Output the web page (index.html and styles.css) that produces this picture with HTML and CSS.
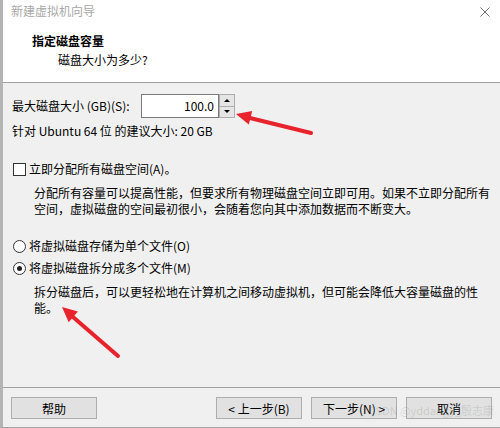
FILE: index.html
```html
<!DOCTYPE html>
<html>
<head>
  <title>新建虚拟机向导</title>
  <link rel="stylesheet" href="styles.css">
</head>
<body>
  <div class="window">
    <div class="header">
      <div class="titlebar">
        <span class="title">新建虚拟机向导</span>
        <svg class="close" width="10" height="10" viewBox="0 0 10 10">
          <path d="M0.5 0.5 L9.5 9.5 M9.5 0.5 L0.5 9.5" stroke="#6f6f6f" stroke-width="1" fill="none"/>
        </svg>
      </div>
      <div class="heading">指定磁盘容量</div>
      <div class="subheading">磁盘大小为多少?</div>
    </div>

    <div class="content">
      <div class="size-row">
        <label class="size-label">最大磁盘大小 (GB)(S):</label>
        <div class="spin">
          <div class="spin-input">100.0</div>
          <div class="spin-buttons">
            <span class="spin-btn"><i class="tri up"></i></span>
            <span class="spin-btn"><i class="tri down"></i></span>
          </div>
        </div>
      </div>
      <div class="hint">针对 Ubuntu 64 位 的建议大小: 20 GB</div>

      <div class="option check-row"><span class="checkbox"></span>立即分配所有磁盘空间(A)。</div>
      <div class="desc">分配所有容量可以提高性能，但要求所有物理磁盘空间立即可用。如果不立即分配所有<br>空间，虚拟磁盘的空间最初很小，会随着您向其中添加数据而不断变大。</div>

      <div class="option radio-row"><span class="radio"></span>将虚拟磁盘存储为单个文件(O)</div>
      <div class="option radio-row second"><span class="radio checked"></span>将虚拟磁盘拆分成多个文件(M)</div>
      <div class="desc">拆分磁盘后，可以更轻松地在计算机之间移动虚拟机，但可能会降低大容量磁盘的性<br>能。</div>
    </div>

    <div class="footer">
      <button class="btn">帮助</button>
      <div class="nav">
        <button class="btn">&lt; 上一步(B)</button>
        <button class="btn">下一步(N) &gt;</button>
        <button class="btn">取消</button>
      </div>
    </div>

    <!-- annotation arrows drawn over the dialog -->
    <svg class="arrows" width="500" height="428" viewBox="0 0 500 428">
      <line x1="311" y1="133" x2="250" y2="118" stroke="#e8232b" stroke-width="4" stroke-linecap="round"/>
      <polygon points="236,114 252.2,110.9 248.8,124.5" fill="#e8232b"/>
      <line x1="118" y1="356" x2="73" y2="317" stroke="#e8232b" stroke-width="4" stroke-linecap="round"/>
      <polygon points="62,307 77.9,311.6 68.7,322.2" fill="#e8232b"/>
    </svg>
    <div class="watermark">CSDN @yddangy_殷志康</div>
  </div>
</body>
</html>
```

FILE: styles.css
```css
body {
  margin: 0;
  background-color: #f0f0f0;
  font-family: "Noto Sans CJK SC", "Microsoft YaHei", sans-serif;
  font-size: 12px;
  line-height: 16px;
  color: #000;
}

.window {
  position: relative;
  width: 500px;
  height: 428px;
  box-sizing: border-box;
  border-left: 3px solid #b4b4b4;
  border-bottom: 1px solid #a0a0a0;
  background-color: #f0f0f0;
  display: flex;
  flex-direction: column;
}

.header {
  height: 82px;
  background-color: #fff;
  border-bottom: 1px solid #a0a0a0;
  padding-left: 8px;
  padding-right: 10px;
}

.titlebar {
  display: flex;
  justify-content: space-between;
  align-items: center;
  height: 16px;
  padding-top: 3px;
}

.title {
  color: #a8a8a8;
}

.close {
  margin-top: 1px;
}

.heading {
  font-weight: bold;
  margin-top: 14px;
  padding-left: 21px;
}

.subheading {
  margin-top: 3px;
  padding-left: 47px;
}

.content {
  padding-left: 9px;
}

.size-row {
  display: flex;
  align-items: center;
  margin-top: 11px;
}

.size-label {
  width: 129px;
}

.spin {
  display: flex;
}

.spin-input {
  width: 72px;
  height: 22px;
  line-height: 22px;
  border: 1px solid #7a7a7a;
  background-color: #fff;
  text-align: right;
  padding-right: 4px;
}

.spin-buttons {
  display: flex;
  flex-direction: column;
  width: 16px;
  height: 24px;
}

.spin-btn {
  flex: 1;
  display: flex;
  align-items: center;
  justify-content: center;
  box-sizing: border-box;
  border: 1px solid #adadad;
  background-color: #e5e5e5;
}

.spin-btn + .spin-btn {
  border-top: none;
}

.tri {
  width: 0;
  height: 0;
  border-left: 3px solid transparent;
  border-right: 3px solid transparent;
}

.tri.up {
  border-bottom: 3px solid #000;
}

.tri.down {
  border-top: 3px solid #000;
}

.hint {
  margin-top: 5px;
}

.option {
  display: flex;
  align-items: center;
  padding-left: 1px;
}

.check-row {
  margin-top: 22px;
}

.checkbox {
  width: 11px;
  height: 11px;
  border: 1px solid #333;
  background-color: #fff;
  margin-right: 3px;
}

.radio-row {
  margin-top: 21px;
}

.radio-row.second {
  margin-top: 6px;
}

.radio {
  width: 11px;
  height: 11px;
  border: 1px solid #333;
  border-radius: 50%;
  background-color: #fff;
  margin-right: 3px;
  display: flex;
  align-items: center;
  justify-content: center;
}

.radio.checked::after {
  content: "";
  width: 5px;
  height: 5px;
  border-radius: 50%;
  background-color: #222;
}

.desc {
  margin-top: 8px;
  padding-left: 22px;
  white-space: nowrap;
}

.footer {
  margin-top: auto;
  border-top: 1px solid #a0a0a0;
  padding: 9px 8px 8px 8px;
  display: flex;
  justify-content: space-between;
}

.nav {
  display: flex;
  gap: 9px;
}

.btn {
  width: 86px;
  height: 22px;
  padding: 0;
  border: 1px solid #adadad;
  background-color: #e1e1e1;
  font-family: inherit;
  font-size: 12px;
  color: #000;
}

.arrows {
  position: absolute;
  top: 0;
  left: -3px;
  pointer-events: none;
}

.watermark {
  position: absolute;
  right: 6px;
  bottom: 9px;
  font-size: 11px;
  color: rgba(120, 120, 120, 0.22);
  white-space: nowrap;
  pointer-events: none;
}
```
